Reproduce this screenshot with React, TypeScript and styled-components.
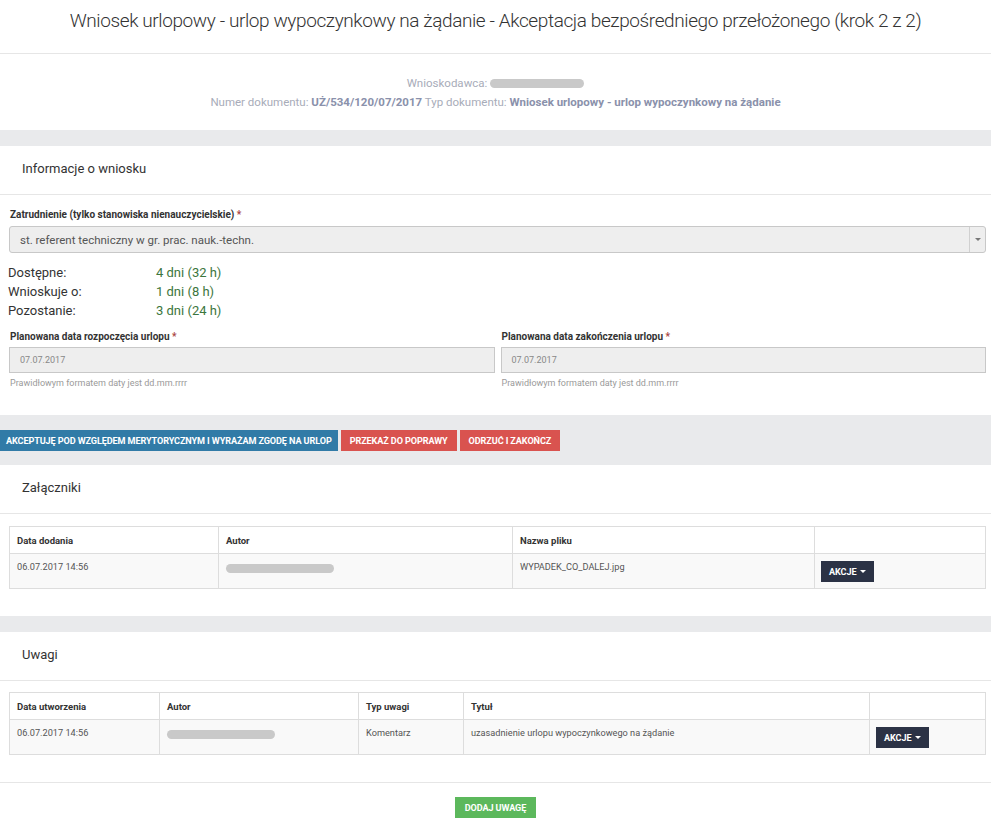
import React from "react";
import styled, { createGlobalStyle } from "styled-components";

const GlobalStyle = createGlobalStyle`
  html, body { margin: 0; padding: 0; }
  body {
    background: #fff;
    font-family: Roboto, "Noto Sans", "Liberation Sans", sans-serif;
    color: #333;
  }
  * { box-sizing: border-box; }
`;

const Page = styled.div`
  display: flex;
  flex-direction: column;
  background: #e9eaec;
`;

const Panel = styled.section<{ $gapAfter?: number }>`
  background: #fff;
  margin-bottom: ${(p) => p.$gapAfter ?? 0}px;
`;

const TitleBar = styled.div`
  height: 54px;
  border-bottom: 1px solid #e6e6e6;
  display: flex;
  align-items: center;
  justify-content: center;
  padding-bottom: 13px;
`;

const Title = styled.h1`
  margin: 0;
  font-weight: 300;
  font-size: 19px;
  color: #333;
  letter-spacing: -0.4px;
`;

const Meta = styled.div`
  height: 76px;
  display: flex;
  flex-direction: column;
  align-items: center;
  padding-top: 22px;
  gap: 5px;
  font-size: 11.5px;
  color: #a8acb9;
`;

const MetaLine = styled.div`
  display: flex;
  align-items: center;
  gap: 3px;
  line-height: 14px;
`;

const MetaValue = styled.b`
  color: #8a91ab;
  font-weight: 700;
`;

const Redacted = styled.span<{ $w: number }>`
  display: inline-block;
  width: ${(p) => p.$w}px;
  height: 9px;
  border-radius: 5px;
  background: #c9c9c9;
  vertical-align: middle;
`;

const Spacer = styled.div<{ $h: number }>`
  height: ${(p) => p.$h}px;
`;

const PanelHeading = styled.div`
  height: 49px;
  border-bottom: 1px solid #e6e6e6;
  padding: 0 0 4px 22px;
  display: flex;
  align-items: center;
  font-size: 13px;
  color: #333;
`;

const PanelBody = styled.div<{ $pt: number; $pb: number }>`
  padding: ${(p) => p.$pt}px 5px ${(p) => p.$pb}px 9px;
`;

const Label = styled.label`
  display: block;
  font-size: 10px;
  font-weight: 700;
  color: #333;
  margin: 0 0 5px 1px;
  line-height: 13px;
`;

const Req = styled.span`
  color: #a94442;
`;

const SelectBox = styled.div`
  height: 27px;
  border: 1px solid #c8c8c8;
  border-radius: 3px;
  background: #eee;
  display: flex;
  align-items: stretch;
`;

const SelectText = styled.div`
  flex: 1;
  display: flex;
  align-items: center;
  padding-left: 10px;
  font-size: 11.5px;
  color: #555;
`;

const SelectArrow = styled.div`
  width: 16px;
  border-left: 1px solid #d0d0d0;
  display: flex;
  align-items: center;
  justify-content: center;
  &::after {
    content: "";
    border-left: 3px solid transparent;
    border-right: 3px solid transparent;
    border-top: 3px solid #777;
  }
`;

const Stats = styled.div`
  display: grid;
  grid-template-columns: 148px auto;
  margin: 10px 0 0 -1px;
  font-size: 13px;
  line-height: 19px;
`;

const StatLabel = styled.div`
  color: #333;
`;

const StatValue = styled.div`
  color: #3c763d;
`;

const DateRow = styled.div`
  display: grid;
  grid-template-columns: 1fr 1fr;
  column-gap: 6px;
  margin-top: 10px;
`;

const Field = styled.div`
  display: flex;
  flex-direction: column;
`;

const DateLabel = styled(Label)`
  margin-bottom: 4px;
`;

const Input = styled.div`
  height: 26px;
  border: 1px solid #c8c8c8;
  background: #eee;
  display: flex;
  align-items: center;
  padding-left: 10px;
  font-size: 9px;
  color: #888;
`;

const Help = styled.div`
  font-size: 9px;
  color: #9a9a9a;
  margin: 4px 0 0 1px;
  line-height: 12px;
`;

const ActionBar = styled.div`
  display: flex;
  gap: 3px;
  padding: 15px 0 14px;
`;

type Variant = "primary" | "danger" | "success" | "dark";

const padFor: Record<Variant, number> = { primary: 6, danger: 9, success: 10, dark: 8 };
const bgFor: Record<Variant, string> = {
  primary: "#317ba7",
  danger: "#d9534f",
  success: "#5cb85c",
  dark: "#2b3245",
};

const Btn = styled.button<{ $variant: Variant }>`
  border: none;
  border-radius: 0;
  height: 21px;
  padding: 0 ${(p) => padFor[p.$variant]}px;
  font-family: inherit;
  font-size: 9.1px;
  font-weight: 700;
  color: #fff;
  text-transform: uppercase;
  letter-spacing: -0.1px;
  display: inline-flex;
  align-items: center;
  gap: 4px;
  cursor: pointer;
  background: ${(p) => bgFor[p.$variant]};
`;

const Caret = styled.span`
  display: inline-block;
  border-left: 3px solid transparent;
  border-right: 3px solid transparent;
  border-top: 3px solid #fff;
`;

const Table = styled.table`
  width: 100%;
  border-collapse: collapse;
  table-layout: fixed;
  border: 1px solid #ddd;
`;

const Th = styled.th`
  border: 1px solid #ddd;
  height: 27px;
  padding: 0 7px;
  text-align: left;
  font-size: 9.5px;
  font-weight: 700;
  color: #333;
`;

const Tr = styled.tr`
  background: #f9f9f9;
`;

const Td = styled.td`
  border: 1px solid #ddd;
  height: 35px;
  padding: 7px 7px 0;
  vertical-align: top;
  font-size: 9.2px;
  color: #555;
`;

const TdAction = styled(Td)`
  padding: 7px 6px 0;
`;

const RedactedCell = styled(Redacted)`
  margin-top: 2px;
`;

const Footer = styled.div`
  border-top: 1px solid #e6e6e6;
  margin-top: 27px;
  display: flex;
  justify-content: center;
  padding: 14px 0 24px;
`;

const cols1 = [209, 294, 302, 171];
const cols2 = [150, 199, 105, 406, 116];

export default function App() {
  return (
    <Page>
      <GlobalStyle />
      <Panel>
        <TitleBar>
          <Title>
            Wniosek urlopowy - urlop wypoczynkowy na żądanie - Akceptacja bezpośredniego przełożonego (krok 2 z 2)
          </Title>
        </TitleBar>
        <Meta>
          <MetaLine>
            Wnioskodawca: <Redacted $w={94} />
          </MetaLine>
          <MetaLine>
            <span>
              Numer dokumentu: <MetaValue>UŻ/534/120/07/2017</MetaValue> Typ dokumentu:{" "}
              <MetaValue>Wniosek urlopowy - urlop wypoczynkowy na żądanie</MetaValue>
            </span>
          </MetaLine>
        </Meta>
      </Panel>

      <Spacer $h={16} />

      <Panel>
        <PanelHeading>Informacje o wniosku</PanelHeading>
        <PanelBody $pt={13} $pb={26}>
          <Label>
            Zatrudnienie (tylko stanowiska nienauczycielskie) <Req>*</Req>
          </Label>
          <SelectBox>
            <SelectText>st. referent techniczny w gr. prac. nauk.-techn.</SelectText>
            <SelectArrow />
          </SelectBox>
          <Stats>
            <StatLabel>Dostępne:</StatLabel>
            <StatValue>4 dni (32 h)</StatValue>
            <StatLabel>Wnioskuje o:</StatLabel>
            <StatValue>1 dni (8 h)</StatValue>
            <StatLabel>Pozostanie:</StatLabel>
            <StatValue>3 dni (24 h)</StatValue>
          </Stats>
          <DateRow>
            <Field>
              <DateLabel>
                Planowana data rozpoczęcia urlopu <Req>*</Req>
              </DateLabel>
              <Input>07.07.2017</Input>
              <Help>Prawidłowym formatem daty jest dd.mm.rrrr</Help>
            </Field>
            <Field>
              <DateLabel>
                Planowana data zakończenia urlopu <Req>*</Req>
              </DateLabel>
              <Input>07.07.2017</Input>
              <Help>Prawidłowym formatem daty jest dd.mm.rrrr</Help>
            </Field>
          </DateRow>
        </PanelBody>
      </Panel>

      <ActionBar>
        <Btn $variant="primary">Akceptuję pod względem merytorycznym i wyrażam zgodę na urlop</Btn>
        <Btn $variant="danger">Przekaż do poprawy</Btn>
        <Btn $variant="danger">Odrzuć i zakończ</Btn>
      </ActionBar>

      <Panel $gapAfter={16}>
        <PanelHeading>Załączniki</PanelHeading>
        <PanelBody $pt={12} $pb={27}>
          <Table>
            <colgroup>
              {cols1.map((w, i) => (
                <col key={i} style={{ width: w }} />
              ))}
            </colgroup>
            <thead>
              <tr>
                <Th>Data dodania</Th>
                <Th>Autor</Th>
                <Th>Nazwa pliku</Th>
                <Th />
              </tr>
            </thead>
            <tbody>
              <Tr>
                <Td>06.07.2017 14:56</Td>
                <Td>
                  <RedactedCell $w={108} />
                </Td>
                <Td>WYPADEK_CO_DALEJ.jpg</Td>
                <TdAction>
                  <Btn $variant="dark">
                    Akcje <Caret />
                  </Btn>
                </TdAction>
              </Tr>
            </tbody>
          </Table>
        </PanelBody>
      </Panel>

      <Panel>
        <PanelHeading>Uwagi</PanelHeading>
        <PanelBody $pt={11} $pb={0}>
          <Table>
            <colgroup>
              {cols2.map((w, i) => (
                <col key={i} style={{ width: w }} />
              ))}
            </colgroup>
            <thead>
              <tr>
                <Th>Data utworzenia</Th>
                <Th>Autor</Th>
                <Th>Typ uwagi</Th>
                <Th>Tytuł</Th>
                <Th />
              </tr>
            </thead>
            <tbody>
              <Tr>
                <Td>06.07.2017 14:56</Td>
                <Td>
                  <RedactedCell $w={108} />
                </Td>
                <Td>Komentarz</Td>
                <Td>uzasadnienie urlopu wypoczynkowego na żądanie</Td>
                <TdAction>
                  <Btn $variant="dark">
                    Akcje <Caret />
                  </Btn>
                </TdAction>
              </Tr>
            </tbody>
          </Table>
        </PanelBody>
        <Footer>
          <Btn $variant="success">Dodaj uwagę</Btn>
        </Footer>
      </Panel>
    </Page>
  );
}
